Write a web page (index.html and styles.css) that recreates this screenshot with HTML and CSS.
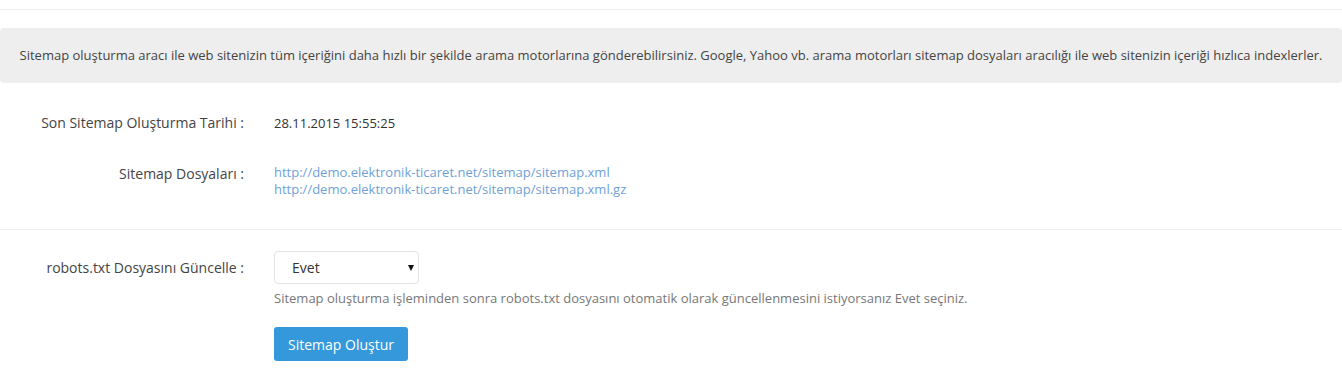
FILE: index.html
```html
<!DOCTYPE html>
<html>
<head>
  <title>Sitemap Oluşturma</title>
  <link rel="stylesheet" href="styles.css">
</head>
<body>

  <div class="page">
    <div class="info">
      Sitemap oluşturma aracı ile web sitenizin tüm içeriğini daha hızlı bir şekilde arama motorlarına gönderebilirsiniz. Google, Yahoo vb. arama motorları sitemap dosyaları aracılığı ile web sitenizin içeriği hızlıca indexlerler.
    </div>

    <div class="section">
      <div class="row row-date">
        <label class="label">Son Sitemap Oluşturma Tarihi :</label>
        <div class="value">28.11.2015 15:55:25</div>
      </div>
      <div class="row row-files">
        <label class="label">Sitemap Dosyaları :</label>
        <div class="value links">
          <a href="#">http://demo.elektronik-ticaret.net/sitemap/sitemap.xml</a>
          <a href="#">http://demo.elektronik-ticaret.net/sitemap/sitemap.xml.gz</a>
        </div>
      </div>
    </div>

    <form class="section form">
      <div class="row row-robots">
        <label class="label">robots.txt Dosyasını Güncelle :</label>
        <div class="value">
          <div class="select-wrap">
            <select class="select">
              <option>Evet</option>
              <option>Hayır</option>
            </select>
          </div>
          <p class="help">Sitemap oluşturma işleminden sonra robots.txt dosyasını otomatik olarak güncellenmesini istiyorsanız Evet seçiniz.</p>
          <button type="button" class="btn">Sitemap Oluştur</button>
        </div>
      </div>
    </form>
  </div>

</body>
</html>
```

FILE: styles.css
```css
body {
  margin: 0;
  font-family: "Open Sans", Arial, sans-serif;
  font-size: 13px;
  color: #333;
  background: #fff;
}
.page {
  border-top: 1px solid #eee;
  margin-top: 9px;
}
.info {
  margin-top: 18px;
  background: #eee;
  border-radius: 4px;
  padding: 18px 19px;
  height: 19px;
  line-height: 19px;
  text-align: center;
  color: #444;
  white-space: nowrap;
}
.section {
  padding: 30px 0 31px;
}
.form {
  border-top: 1px solid #eee;
  padding-top: 21px;
}
.row {
  display: grid;
  grid-template-columns: 244px 1fr;
  column-gap: 30px;
}
.row-files {
  margin-top: 31px;
}
.label {
  text-align: right;
  font-size: 14px;
  line-height: 20px;
  color: #444;
}
.value {
  font-size: 13px;
  line-height: 20px;
}
.row-date .value {
  color: #333;
}
.links a {
  display: block;
  font-size: 13px;
  line-height: 17px;
  color: #6f9fd8;
  text-decoration: none;
}
.row-robots .label {
  padding-top: 7px;
}
.select-wrap {
  position: relative;
  width: 145px;
}
.select {
  appearance: none;
  -webkit-appearance: none;
  width: 145px;
  height: 33px;
  padding: 0 17px;
  font-family: "Open Sans", Arial, sans-serif;
  font-size: 14px;
  color: #333;
  background: #fff;
  border: 1px solid #e3e3e3;
  border-radius: 4px;
}
.select-wrap::after {
  content: "";
  position: absolute;
  right: 5px;
  top: 14px;
  border-left: 3px solid transparent;
  border-right: 3px solid transparent;
  border-top: 6px solid #111;
}
.help {
  margin: 5px 0 0;
  font-size: 13px;
  line-height: 18px;
  color: #777;
}
.btn {
  margin-top: 20px;
  background-color: #3498db;
  color: #fff;
  border: none;
  border-radius: 3px;
  height: 34px;
  width: 134px;
  font-family: "Open Sans", Arial, sans-serif;
  font-size: 14px;
  cursor: pointer;
}
```
